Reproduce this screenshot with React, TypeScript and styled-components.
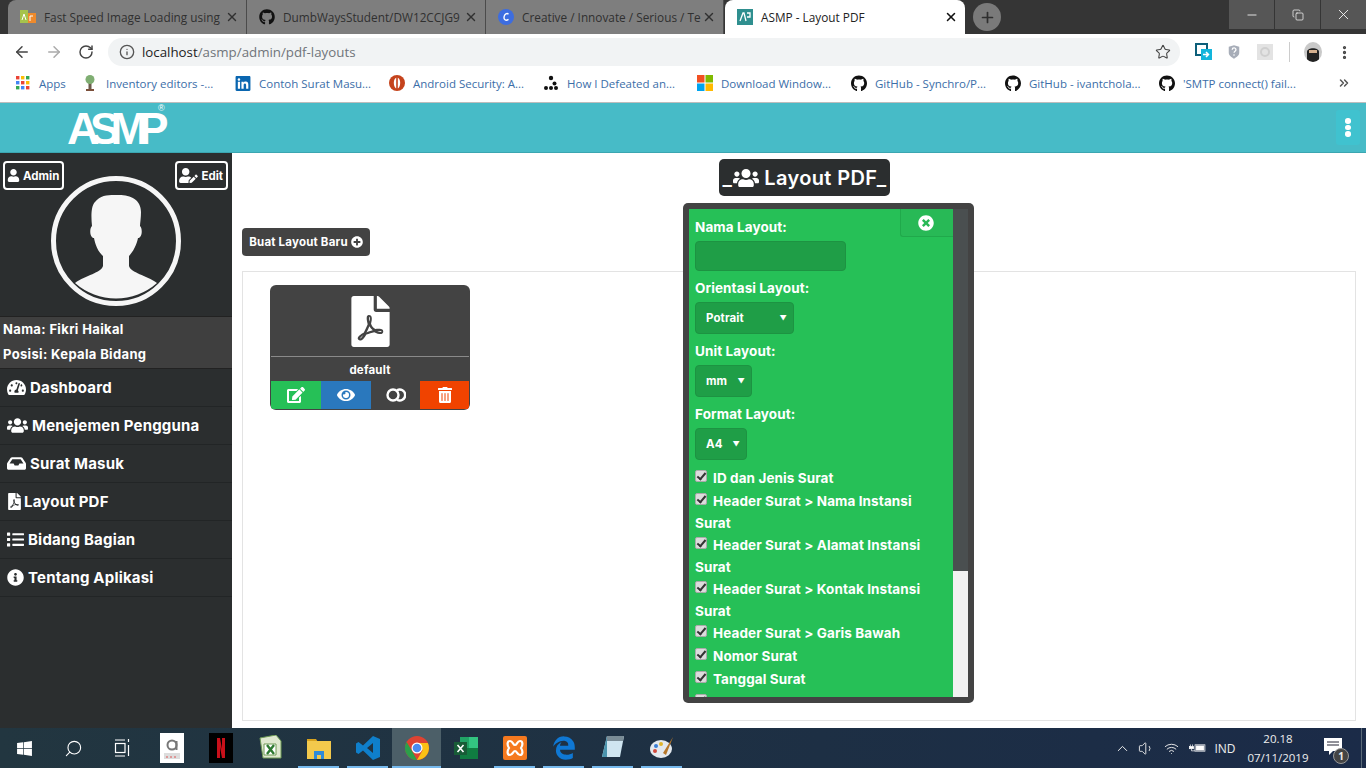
import React from 'react';
import styled, { createGlobalStyle } from 'styled-components';
import { ArrowLeft, ArrowRight, RotateCw, Info, Star, X, Minus, Copy, Plus, Search, ChevronUp, Volume1, Wifi, ChevronsRight, MoreVertical } from 'lucide-react';
import { FaUser, FaUserEdit, FaTachometerAlt, FaUsers, FaInbox, FaFilePdf, FaList, FaInfoCircle, FaPlusCircle, FaEdit, FaEye, FaTrashAlt, FaTimesCircle, FaGithub, FaLinkedin, FaWindows, FaEdgeLegacy } from 'react-icons/fa';

const Global = createGlobalStyle`
  html, body { margin: 0; padding: 0; height: 100%; overflow: hidden; background: #fff; }
  #root { height: 100%; }
  * { box-sizing: border-box; }
`;
const Page = styled.div`
  height: 768px; width: 1366px; display: flex; flex-direction: column; overflow: hidden;
  font-family: "Open Sans", "Liberation Sans", sans-serif;
`;
const TabStrip = styled.div`
  height: 34px; flex: none; display: flex; background: #353535; padding-left: 8px; color: #2b2b2b;
`;
const Tab = styled.div<{ $active?: boolean; $w?: number }>`
  width: ${p => p.$w ?? 239}px; flex: none; height: 34px; display: flex; align-items: center; padding: 0 7px 0 12px; gap: 8px;
  background: ${p => (p.$active ? '#fff' : '#7e7e7e')};
  color: ${p => (p.$active ? '#222' : '#303030')};
  border-radius: ${p => (p.$active ? '8px 8px 0 0' : '0')};
  border-right: ${p => (p.$active ? 'none' : '1px solid #4b4b4b')};
  font-size: 11.8px;
  margin-left: ${p => (p.$active ? '1px' : '0')};
  &:first-child { border-radius: 8px 0 0 0; }
`;
const TabTitle = styled.span`
  flex: 1; min-width: 0; white-space: nowrap;
`;
const NewTab = styled.div`
  width: 28px; height: 28px; border-radius: 50%; background: #7a7a7a; color: #2f2f2f; display: flex; align-items: center; justify-content: center; margin: 3px 0 0 8px; flex: none;
`;
const WinControls = styled.div`
  margin-left: auto; display: flex; height: 29px; gap: 1px;
`;
const WinBtn = styled.div`
  width: 45px; height: 29px; background: #565656; color: #fff; display: flex; align-items: center; justify-content: center;
`;
const Toolbar = styled.div`
  height: 32px; flex: none; display: flex; align-items: flex-end; background: #fff; padding: 0 0 0 12px; color: #5f6368;
`;
const NavIcon = styled.div<{ $w?: number; $dim?: boolean }>`
  width: ${p => p.$w ?? 32}px; height: 28px; display: flex; align-items: center; justify-content: center; flex: none;
  color: ${p => (p.$dim ? '#aaa' : '#444')};
`;
const AddressBar = styled.div`
  width: 1072px; height: 28px; margin-left: 12px; border-radius: 14px; background: #f1f3f4; display: flex; align-items: center; padding: 0 9px 1px 11px; gap: 7px; font-size: 13.3px; color: #70757a; flex: none;
`;
const Url = styled.span`
  flex: 1; b { font-weight: 400; color: #222; }
`;
const ToolSep = styled.div`
  width: 1px; height: 20px; background: #ccc; margin: 0 8px 4px -1px;
`;
const Avatar = styled.div`
  width: 20px; height: 20px; border-radius: 50%; background: #c9c9c9; display: flex; align-items: flex-end; justify-content: center; margin: 0 0 4px 6px; overflow: hidden;
`;
const Bookmarks = styled.div`
  height: 37px; flex: none; display: flex; align-items: center; background: #fff; padding: 0 0 2px 15px; border-bottom: 1px solid #bdbdbd; font-size: 11.5px; color: #3b6ea8;
`;
const Bookmark = styled.div<{ $w: number }>`
  width: ${p => p.$w}px; flex: none; display: flex; align-items: center; gap: 8px; white-space: nowrap; overflow: hidden;
`;
const BmIcon = styled.div`
  width: 16px; height: 16px; display: flex; align-items: center; justify-content: center; color: #111; flex: none;
`;
const More = styled.div`
  margin-left: auto; margin-right: 15px; color: #555; display: flex;
`;
const TopNav = styled.div`
  height: 50px; flex: none; background: #47bbc7; display: flex; align-items: center; justify-content: space-between; padding: 0 6px 0 67px; border-bottom: 1px solid #3ba6b1;
`;
const Logo = styled.div`
  position: relative; color: #fff; font: 700 45px/1 "Liberation Sans", sans-serif; letter-spacing: -9.5px; width: 100px; height: 36px; margin-top: 3px; line-height: 36px; white-space: nowrap;
  sup { position: absolute; left: 91px; top: -7px; font-size: 9px; line-height: 9px; letter-spacing: 0; font-weight: 400; }
`;
const Kebab = styled.div`
  width: 24px; height: 35px; border-radius: 3px; background: #40c2cf; display: flex; flex-direction: column; align-items: center; justify-content: center; gap: 1px;
  i { width: 5.5px; height: 5.5px; border-radius: 50%; background: #fff; }
`;
const Body = styled.div`
  flex: 1; min-height: 0; display: flex;
`;
const Sidebar = styled.aside`
  width: 232px; flex: none; background: #2b2e2f; color: #fff; font-family: Inter, "Liberation Sans", sans-serif; font-weight: 700;
  display: flex; flex-direction: column; padding-top: 8px; letter-spacing: .2px;
`;
const BadgeRow = styled.div`
  display: flex; justify-content: space-between; padding: 0 4px 0 3px; height: 29px;
`;
const Badge = styled.div`
  display: flex; align-items: center; gap: 3px; border: 2px solid #fff; border-radius: 4px; padding: 0 3px 0 2px; font-size: 11.5px; position: relative; z-index: 1; letter-spacing: 0;
`;
const EditIcon = styled(FaUserEdit)`
  width: 19px; height: 15px;
`;
const AvatarWrap = styled.div`
  display: flex; justify-content: center; margin: -14px 0 10px;
`;
const Profile = styled.div`
  background: #3f3f3f; border-top: 1px solid #222; border-bottom: 1px solid #222; height: 53px; padding: 0 0 2px 3px; font-size: 13px; letter-spacing: .35px; display: flex; flex-direction: column; justify-content: space-around;
`;
const MenuItem = styled.div`
  height: 38px; display: flex; align-items: center; gap: 4px; padding-left: 7px; font-size: 15px; border-bottom: 1px solid #222526;
`;
const PdfMenuIcon = styled(FaFilePdf)`
  width: 13px; height: 17px; margin-left: 1px; margin-right: -1px;
`;
const Main = styled.main`
  flex: 1; min-width: 0; position: relative; background: #fff; padding: 6px 10px 7px; display: flex; flex-direction: column; font-family: Inter, "Liberation Sans", sans-serif; font-weight: 700;
`;
const HeadingRow = styled.div`
  display: flex; justify-content: center; padding-left: 11px;
`;
const Heading = styled.h1`
  margin: 0; height: 37px; width: 171px; background: #2b2e2f; color: #fff; border-radius: 5px; font-size: 20px; font-weight: 600; letter-spacing: .35px; display: flex; align-items: center; justify-content: center; white-space: nowrap;
`;
const HeadingIcon = styled(FaUsers)`
  width: 26px; height: 26px; margin: 0 5px 0 1px;
`;
const NewBtn = styled.div`
  margin-top: 32px; align-self: flex-start; height: 28px; width: 128px; background: #434343; color: #fff; border-radius: 4px; font-size: 11.5px; letter-spacing: .2px; display: flex; align-items: center; justify-content: center; gap: 3px; white-space: nowrap;
`;
const Panel = styled.section`
  margin-top: 15px; flex: 1; border: 1px solid #e3e3e3; padding: 13px 27px;
`;
const Card = styled.div`
  width: 200px; height: 125px; background: #434343; border-radius: 6px; overflow: hidden; color: #fff; display: flex; flex-direction: column; padding: 0 1px 1px;
`;
const CardIcon = styled.div`
  height: 72px; flex: none; display: flex; align-items: flex-start; justify-content: center; padding-top: 11px; border-bottom: 1px solid #8a8a8a;
`;
const CardName = styled.div`
  height: 24px; flex: none; padding-top: 2px; display: flex; align-items: center; justify-content: center; font-size: 11.5px; letter-spacing: .2px;
`;
const Actions = styled.div`
  flex: 1; display: grid; grid-template-columns: 50px 50px 49px 49px;
`;
const Action = styled.div<{ $bg: string }>`
  background: ${p => p.$bg}; display: flex; align-items: center; justify-content: center; color: #fff;
`;
const Modal = styled.div`
  position: absolute; left: 451px; top: 50px; width: 291px; height: 500px; background: #434343; border-radius: 5px; padding: 6px; display: flex; z-index: 3;
`;
const Form = styled.div`
  width: 264px; height: 488px; overflow: hidden; position: relative; background: #26c057; color: #fff; padding: 8px 6px; font-size: 13.5px; letter-spacing: .1px; flex: none;
`;
const ScrollTrack = styled.div`
  flex: 1; background: #f1f1f1; display: flex; flex-direction: column;
`;
const ScrollThumb = styled.div`
  height: 362px; background: #4a4f50;
`;
const CloseBtn = styled.div`
  position: absolute; right: 0; top: 0; width: 53px; height: 28px; padding-right: 2px; background: #28b956; border-left: 1px solid #20a94b; border-bottom: 1px solid #20a94b; border-radius: 0 0 0 3px; display: flex; align-items: center; justify-content: center;
`;
const Label = styled.div`
  line-height: 20px; height: 20px; margin-bottom: 4px;
`;
const TextField = styled.div`
  width: 151px; height: 30px; background: #1f9e47; border: 1px solid #1d9342; border-radius: 4px; margin-bottom: 7px;
`;
const Select = styled.div<{ $w: number }>`
  width: ${p => p.$w}px; height: 32px; background: #1f9e47; border: 1px solid #1d9342; border-radius: 4px; margin-bottom: 7px; font-size: 11.5px; display: flex; align-items: center; justify-content: space-between; padding: 0 6px 0 10px;
  span:last-child { font-size: 7px; }
`;
const CheckRow = styled.div`
  line-height: 22px; min-height: 23px;
`;
const Check = styled.input`
  appearance: none; width: 12px; height: 12px; margin: 0 6px 0 0; background: #dcdcdc; border: 1px solid #aaa; border-radius: 2px; position: relative; vertical-align: 1px;
  &::after { content: ''; position: absolute; left: 3px; top: 0; width: 3px; height: 7px; border: solid #333; border-width: 0 2px 2px 0; transform: rotate(40deg); }
`;
const Taskbar = styled.footer`
  height: 40px; flex: none; background: linear-gradient(90deg, #223640, #1d2f44 60%, #1b2b48); display: flex; align-items: center; color: #fff; font-family: "Open Sans", "Liberation Sans", sans-serif;
`;
const Slot = styled.div<{ $on?: boolean; $open?: boolean }>`
  width: 49px; height: 40px; display: flex; align-items: center; justify-content: center; flex: none; position: relative;
  background: ${p => (p.$on ? '#4c5f68' : 'transparent')};
  &::after { content: ''; position: absolute; left: ${p => (p.$on ? 0 : 4)}px; right: ${p => (p.$on ? 0 : 4)}px; bottom: 0; height: 2px; background: ${p => (p.$open ? '#76b9ed' : 'transparent')}; }
`;
const Tray = styled.div`
  margin-left: auto; display: flex; align-items: center; height: 40px; font-size: 12px; color: #eee;
`;
const TrayIcon = styled.div<{ $w: number }>`
  width: ${p => p.$w}px; display: flex; justify-content: center; align-items: center; flex: none;
`;
const Clock = styled.div`
  width: 72px; text-align: center; line-height: 19px; font-size: 11.5px; margin-left: 2px;
`;
const Notify = styled.div`
  position: relative; width: 24px; margin: 0 16px 0 7px; height: 30px; display: flex; align-items: center; justify-content: center; padding-bottom: 4px;
  b { position: absolute; right: -4px; bottom: -1px; width: 16px; height: 16px; border-radius: 50%; background: #444; border: 1px solid #999; font: 700 10px/14px "Open Sans", sans-serif; text-align: center; }
`;
const ShowDesktop = styled.div`
  width: 5px; height: 40px; border-left: 1px solid #5a6a78;
`;

const Apps = () => (
  <svg width="14" height="14" viewBox="0 0 14 14">
    {['#ea4335', '#fbbc05', '#34a853', '#4285f4', '#ea4335', '#fbbc05', '#34a853', '#4285f4', '#ea4335'].map((c, i) => (
      <rect key={i} x={(i % 3) * 5} y={Math.floor(i / 3) * 5} width="3.4" height="3.4" fill={c} />
    ))}
  </svg>
);
const MsLogo = () => (
  <svg width="16" height="16" viewBox="0 0 16 16">
    <rect width="7.5" height="7.5" fill="#f25022" /><rect x="8.5" width="7.5" height="7.5" fill="#7fba00" />
    <rect y="8.5" width="7.5" height="7.5" fill="#00a4ef" /><rect x="8.5" y="8.5" width="7.5" height="7.5" fill="#ffb900" />
  </svg>
);
const Molecule = () => (
  <svg width="16" height="16" viewBox="0 0 16 16" fill="#111">
    <circle cx="8" cy="3" r="2.2" /><circle cx="11.5" cy="8.5" r="2" /><circle cx="3" cy="13" r="2" /><circle cx="8" cy="13" r="2" /><circle cx="13" cy="13" r="2" />
  </svg>
);
const Tree = () => (
  <svg width="14" height="18" viewBox="0 0 14 18">
    <rect x="5.5" y="8" width="3" height="7" fill="#6b5b4b" /><circle cx="7" cy="5.5" r="4.5" fill="#7fae72" /><rect x="3" y="15" width="8" height="2.5" fill="#7b4f3a" />
  </svg>
);
const AndroidSec = () => (
  <svg width="16" height="16" viewBox="0 0 16 16">
    <circle cx="8" cy="8" r="8" fill="#c5431c" /><ellipse cx="8" cy="8" rx="3.2" ry="5.6" fill="#fff" /><rect x="7.2" y="2" width="1.6" height="12" fill="#c5431c" />
  </svg>
);
const FavAsmp = () => (
  <svg width="16" height="16" viewBox="0 0 16 16"><rect width="16" height="16" fill="#2f8f8f" /><path d="M3 12 6 4h1l2 8M10 4h3v4h-3" stroke="#fff" strokeWidth="1.3" fill="none" /></svg>
);
const FavAR = () => (
  <svg width="16" height="16" viewBox="0 0 16 16"><rect y="1" width="8" height="13" fill="#a6c34c" /><rect x="8" y="4" width="8" height="10" fill="#ee8a2c" /><path d="M2 11l2-6 2 6M10 12V7h3" stroke="#fff" fill="none" /></svg>
);
const FavC = () => (
  <svg width="16" height="16" viewBox="0 0 16 16"><circle cx="8" cy="8" r="8" fill="#3d6de0" /><path d="M10.5 5.2C9 3.8 6.5 5 6 8c-.4 3 2 4 4.5 2.4" stroke="#fff" strokeWidth="1.4" fill="none" /></svg>
);
const ExtCast = () => (
  <svg width="18" height="18" viewBox="0 0 18 18"><rect x="1" y="1" width="11" height="11" fill="none" stroke="#0d5f7a" strokeWidth="2" /><rect x="6" y="6" width="11" height="11" fill="#12b5dc" /><path d="M8 11.5h5M11 9l2.5 2.5L11 14" stroke="#fff" strokeWidth="1.5" fill="none" /></svg>
);
const ExtShield = () => (
  <svg width="16" height="18" viewBox="0 0 16 18"><path d="M1 2 8 0l7 2v8c0 4-4 6-7 8-3-2-7-4-7-8z" fill="#a7adb8" /><path d="M5.6 6c0-3.2 5-3.2 5 0 0 2-2.5 2-2.5 4" stroke="#fff" strokeWidth="1.7" fill="none" /><circle cx="8" cy="13" r="1.1" fill="#fff" /></svg>
);
const ExtGhost = () => (
  <svg width="16" height="16" viewBox="0 0 16 16"><rect width="16" height="16" fill="#e3e3e3" /><circle cx="8" cy="8" r="4" fill="none" stroke="#cfcfcf" strokeWidth="2" /></svg>
);
const Ninja = () => (
  <svg width="14" height="18" viewBox="0 0 14 18"><path d="M1 18V8c0-5 12-5 12 0v10z" fill="#222" /><rect x="3" y="6" width="8" height="3" fill="#d5b08f" /></svg>
);
const Rings = () => (
  <svg width="20" height="14" viewBox="0 0 20 14" fill="none" stroke="#fff" strokeWidth="2.4"><circle cx="7" cy="7" r="5.5" /><path d="M11 2.200a5.500 5.500 0 1 1 0 9.600" /></svg>
);
const Silhouette = () => (
  <svg width="130" height="130" viewBox="0 0 130 130">
    <circle cx="65" cy="65" r="62.5" fill="#2b2e2f" stroke="#f6f6f6" strokeWidth="5" />
    <path fill="#f6f6f6" d="M24 107C35 99 50 97 52 90L52 80C47 76 44 68 43 62C39 62 38 53 41 50C40 40 40 30 44 26C50 18 60 19 68 19C80 19 90 24 90 36C90 42 89 47 89 50C92 53 91 62 87 62C86 68 82 76 78 80L78 90C80 97 95 99 106 107A62 62 0 0 1 24 107z" />
  </svg>
);
const TaskView = () => (
  <svg width="18" height="20" viewBox="0 0 18 20" fill="none" stroke="#fff" strokeWidth="1.2">
    <path d="M1 2h10M1 18h10" /><rect x="1.500" y="5.500" width="9.500" height="9" /><path d="M14.500 1v3M14.500 7v11" />
  </svg>
);
const XlOld = () => (
  <svg width="24" height="26" viewBox="0 0 24 26"><path d="M2 3 18 0l5 6v17H5z" fill="#dfe8cf" stroke="#6e9a55" /><path d="M6 9h12v11H6z" fill="#fff" stroke="#6e9a55" /><path d="M9 10l7 9M16 10l-7 9" stroke="#2f7a32" strokeWidth="2.4" /></svg>
);
const Folder = () => (
  <svg width="24" height="22" viewBox="0 0 24 22"><path d="M0 2h9l2 3H0z" fill="#d8a31e" /><rect y="4" width="24" height="18" fill="#f3c94c" /><rect x="7" y="14" width="10" height="8" fill="#2f8ad8" /><rect x="10" y="18" width="4" height="4" fill="#f3c94c" /></svg>
);
const VsCode = () => (
  <svg width="24" height="24" viewBox="0 0 24 24"><path d="M17 0 24 3v18l-7 3-10-9.5L2.5 18 0 16.5V7.5L2.5 6 7 9.500zM17 7l-6 5 6 5z" fill="#0f7fcb" fillRule="evenodd" /></svg>
);
const Chrome = () => (
  <svg width="24" height="24" viewBox="0 0 24 24">
    <circle cx="12" cy="12" r="12" fill="#de4332" /><path d="M12 24A12 12 0 0 1 1.600 6L7 15z" fill="#2c9f4a" /><path d="M12 24 17.500 14.500 12 7h10.900A12 12 0 0 1 12 24z" fill="#fbc115" /><circle cx="12" cy="12" r="5.500" fill="#fff" /><circle cx="12" cy="12" r="4.300" fill="#4a8cf0" />
  </svg>
);
const Excel = () => (
  <svg width="24" height="24" viewBox="0 0 24 24"><rect x="6" y="1" width="18" height="22" fill="#21a366" /><rect x="6" y="12" width="18" height="11" fill="#107c41" /><rect x="15" y="1" width="9" height="11" fill="#33c481" /><rect y="6" width="13" height="13" fill="#185c37" /><path d="M3.500 9l6 7M9.500 9l-6 7" stroke="#fff" strokeWidth="1.600" /></svg>
);
const Xampp = () => (
  <svg width="24" height="24" viewBox="0 0 24 24"><rect width="24" height="24" rx="2" fill="#f5791f" /><path d="M7 5c3 0 3 4 5 4s2-4 5-4 3 4 1 7c2 3 2 7-1 7s-3-4-5-4-2 4-5 4-3-4-1-7c-2-3-2-7 1-7z" fill="none" stroke="#fff" strokeWidth="2.200" /></svg>
);
const Notepad = () => (
  <svg width="24" height="26" viewBox="0 0 24 26"><path d="M6 1h17l-4 21H1z" fill="#cfe5f0" /><path d="M6 1h17l-1 5H5z" fill="#7a8c96" /><path d="M1 22l5-21v21z" fill="#4b94ad" /></svg>
);
const Paint = () => (
  <svg width="26" height="26" viewBox="0 0 26 26"><ellipse cx="12" cy="14" rx="11" ry="9" fill="#e4e9ee" /><circle cx="7" cy="11" r="2" fill="#3b7fd4" /><circle cx="12" cy="9" r="2" fill="#e2b52a" /><circle cx="6" cy="16" r="2" fill="#d14a3c" /><path d="M24 2 14 18l3 2z" fill="#b7772a" /></svg>
);
const Amazon = () => (
  <svg width="24" height="30" viewBox="0 0 24 30"><rect width="24" height="30" fill="#fff" /><circle cx="12" cy="12" r="4.500" fill="none" stroke="#777" strokeWidth="2" /><path d="M16.500 8v9" stroke="#777" strokeWidth="2" /><rect x="4" y="20" width="16" height="6" fill="#ddd" /><path d="M6 24h2M10 24h2M14 24h2" stroke="#d55" /></svg>
);
const Netflix = () => (
  <svg width="24" height="30" viewBox="0 0 24 30"><rect width="24" height="30" fill="#000" /><path d="M8 5h3l2 11V5h3v20h-3l-2-11v11H8z" fill="#c8101a" /></svg>
);
const Speaker = () => <Volume1 size={17} strokeWidth={1.3} />;
const Battery = () => (
  <svg width="17" height="14" viewBox="0 0 24 14" fill="none" stroke="#fff"><path d="M2 2v3M5 2v3" /><rect x="0.500" y="5" width="6" height="3" fill="#fff" /><path d="M3.500 8v3h5" /><rect x="8.500" y="2.500" width="14" height="9" /><rect x="10" y="4" width="11" height="6" fill="#fff" /></svg>
);
const Message = () => (
  <svg width="18" height="17" viewBox="0 0 18 17"><path d="M0 0h18v13H9l-4 4v-4H0z" fill="#fff" /><path d="M3 4h12M3 7h12" stroke="#223" /></svg>
);

const bookmarks: [React.ReactNode, string, number][] = [
  [<Apps />, 'Apps', 67],
  [<Tree />, 'Inventory editors -...', 153],
  [<FaLinkedin size={17} color="#0a66b0" />, 'Contoh Surat Masu...', 154],
  [<AndroidSec />, 'Android Security: A...', 154],
  [<Molecule />, 'How I Defeated an...', 154],
  [<MsLogo />, 'Download Window...', 154],
  [<FaGithub size={17} />, 'GitHub - Synchro/P...', 154],
  [<FaGithub size={17} />, 'GitHub - ivantchola...', 154],
  [<FaGithub size={17} />, "'SMTP connect() fail...", 150],
];
const menu: [React.ReactNode, string][] = [
  [<FaTachometerAlt size={19} />, 'Dashboard'],
  [<FaUsers size={21} />, 'Menejemen Pengguna'],
  [<FaInbox size={19} />, 'Surat Masuk'],
  [<PdfMenuIcon />, 'Layout PDF'],
  [<FaList size={17} />, 'Bidang Bagian'],
  [<FaInfoCircle size={17} />, 'Tentang Aplikasi'],
];
const checks = [
  'ID dan Jenis Surat',
  'Header Surat > Nama Instansi Surat',
  'Header Surat > Alamat Instansi Surat',
  'Header Surat > Kontak Instansi Surat',
  'Header Surat > Garis Bawah',
  'Nomor Surat',
  'Tanggal Surat',
  '',
];
const selects: [string, string, number][] = [
  ['Orientasi Layout:', 'Potrait', 99],
  ['Unit Layout:', 'mm', 57],
  ['Format Layout:', 'A4', 52],
];
const tasks: [React.ReactNode, boolean, boolean][] = [
  [<FaWindows size={17} />, false, false],
  [<Search size={19} strokeWidth={1.4} style={{ transform: 'scaleX(-1)' }} />, false, false],
  [<TaskView />, false, false],
  [<Amazon />, false, false],
  [<Netflix />, false, false],
  [<XlOld />, false, false],
  [<Folder />, false, true],
  [<VsCode />, false, true],
  [<Chrome />, true, true],
  [<Excel />, false, false],
  [<Xampp />, false, true],
  [<FaEdgeLegacy size={24} color="#0f78d4" />, false, true],
  [<Notepad />, false, true],
  [<Paint />, false, true],
];

export default function App() {
  return (
    <Page>
      <Global />
      <TabStrip>
        <Tab><FavAR /><TabTitle>Fast Speed Image Loading using</TabTitle><X size={14} strokeWidth={2.4} /></Tab>
        <Tab><FaGithub size={16} color="#111" /><TabTitle>DumbWaysStudent/DW12CCJG9</TabTitle><X size={14} strokeWidth={2.4} /></Tab>
        <Tab $w={238}><FavC /><TabTitle>Creative / Innovate / Serious / Te</TabTitle><X size={14} strokeWidth={2.4} /></Tab>
        <Tab $active $w={240}><FavAsmp /><TabTitle>ASMP - Layout PDF</TabTitle><X size={14} strokeWidth={2.6} color="#111" /></Tab>
        <NewTab><Plus size={17} strokeWidth={2.4} /></NewTab>
        <WinControls>
          <WinBtn><Minus size={14} strokeWidth={1.4} /></WinBtn>
          <WinBtn><Copy size={12} strokeWidth={1.4} /></WinBtn>
          <WinBtn><X size={17} strokeWidth={1.2} /></WinBtn>
        </WinControls>
      </TabStrip>
      <Toolbar>
        <NavIcon $w={20}><ArrowLeft size={18} strokeWidth={2} /></NavIcon>
        <NavIcon $w={44} $dim><ArrowRight size={18} strokeWidth={2} /></NavIcon>
        <NavIcon $w={20}><RotateCw size={16} strokeWidth={2.2} /></NavIcon>
        <AddressBar>
          <Info size={16} strokeWidth={2} color="#555" />
          <Url><b>localhost</b>/asmp/admin/pdf-layouts</Url>
          <Star size={16} strokeWidth={1.6} color="#444" />
        </AddressBar>
        <NavIcon $w={48}><ExtCast /></NavIcon>
        <NavIcon $w={12}><ExtShield /></NavIcon>
        <NavIcon $w={50}><ExtGhost /></NavIcon>
        <ToolSep />
        <Avatar><Ninja /></Avatar>
        <NavIcon $w={44}><MoreVertical size={17} strokeWidth={2.6} /></NavIcon>
      </Toolbar>
      <Bookmarks>
        {bookmarks.map(([icon, text, w]) => (
          <Bookmark key={text} $w={w}><BmIcon>{icon}</BmIcon><span>{text}</span></Bookmark>
        ))}
        <More><ChevronsRight size={14} strokeWidth={2.6} /></More>
      </Bookmarks>
      <TopNav>
        <Logo>ASMP<sup>®</sup></Logo>
        <Kebab><i /><i /><i /></Kebab>
      </TopNav>
      <Body>
        <Sidebar>
          <BadgeRow>
            <Badge><FaUser size={13} /> Admin</Badge>
            <Badge><EditIcon /> Edit</Badge>
          </BadgeRow>
          <AvatarWrap><Silhouette /></AvatarWrap>
          <Profile>
            <div>Nama: Fikri Haikal</div>
            <div>Posisi: Kepala Bidang</div>
          </Profile>
          {menu.map(([icon, text]) => (
            <MenuItem key={text}>{icon}{text}</MenuItem>
          ))}
        </Sidebar>
        <Main>
          <HeadingRow>
            <Heading>_<HeadingIcon />Layout PDF_</Heading>
          </HeadingRow>
          <NewBtn>Buat Layout Baru <FaPlusCircle size={12} /></NewBtn>
          <Panel>
            <Card>
              <CardIcon><FaFilePdf size={51} color="#fff" /></CardIcon>
              <CardName>default</CardName>
              <Actions>
                <Action $bg="#26c057"><FaEdit size={18} /></Action>
                <Action $bg="#2a78bd"><FaEye size={18} /></Action>
                <Action $bg="#434343"><Rings /></Action>
                <Action $bg="#f04300"><FaTrashAlt size={16} /></Action>
              </Actions>
            </Card>
          </Panel>
          <Modal>
            <Form>
              <CloseBtn><FaTimesCircle size={16} color="#fff" /></CloseBtn>
              <Label>Nama Layout:</Label>
              <TextField />
              {selects.map(([label, value, w]) => (
                <React.Fragment key={label}>
                  <Label>{label}</Label>
                  <Select $w={w}><span>{value}</span><span>▼</span></Select>
                </React.Fragment>
              ))}
              {checks.map((text, i) => (
                <CheckRow key={i}><Check type="checkbox" checked readOnly />{text}</CheckRow>
              ))}
            </Form>
            <ScrollTrack><ScrollThumb /></ScrollTrack>
          </Modal>
        </Main>
      </Body>
      <Taskbar>
        {tasks.map(([icon, on, open], i) => (
          <Slot key={i} $on={on} $open={open}>{icon}</Slot>
        ))}
        <Tray>
          <TrayIcon $w={24}><ChevronUp size={17} strokeWidth={1.4} /></TrayIcon>
          <TrayIcon $w={24}><Speaker /></TrayIcon>
          <TrayIcon $w={26}><Wifi size={15} strokeWidth={1.5} /></TrayIcon>
          <TrayIcon $w={26}><Battery /></TrayIcon>
          <TrayIcon $w={30}>IND</TrayIcon>
          <Clock>20.18<br />07/11/2019</Clock>
          <Notify><Message /><b>1</b></Notify>
          <ShowDesktop />
        </Tray>
      </Taskbar>
    </Page>
  );
}
